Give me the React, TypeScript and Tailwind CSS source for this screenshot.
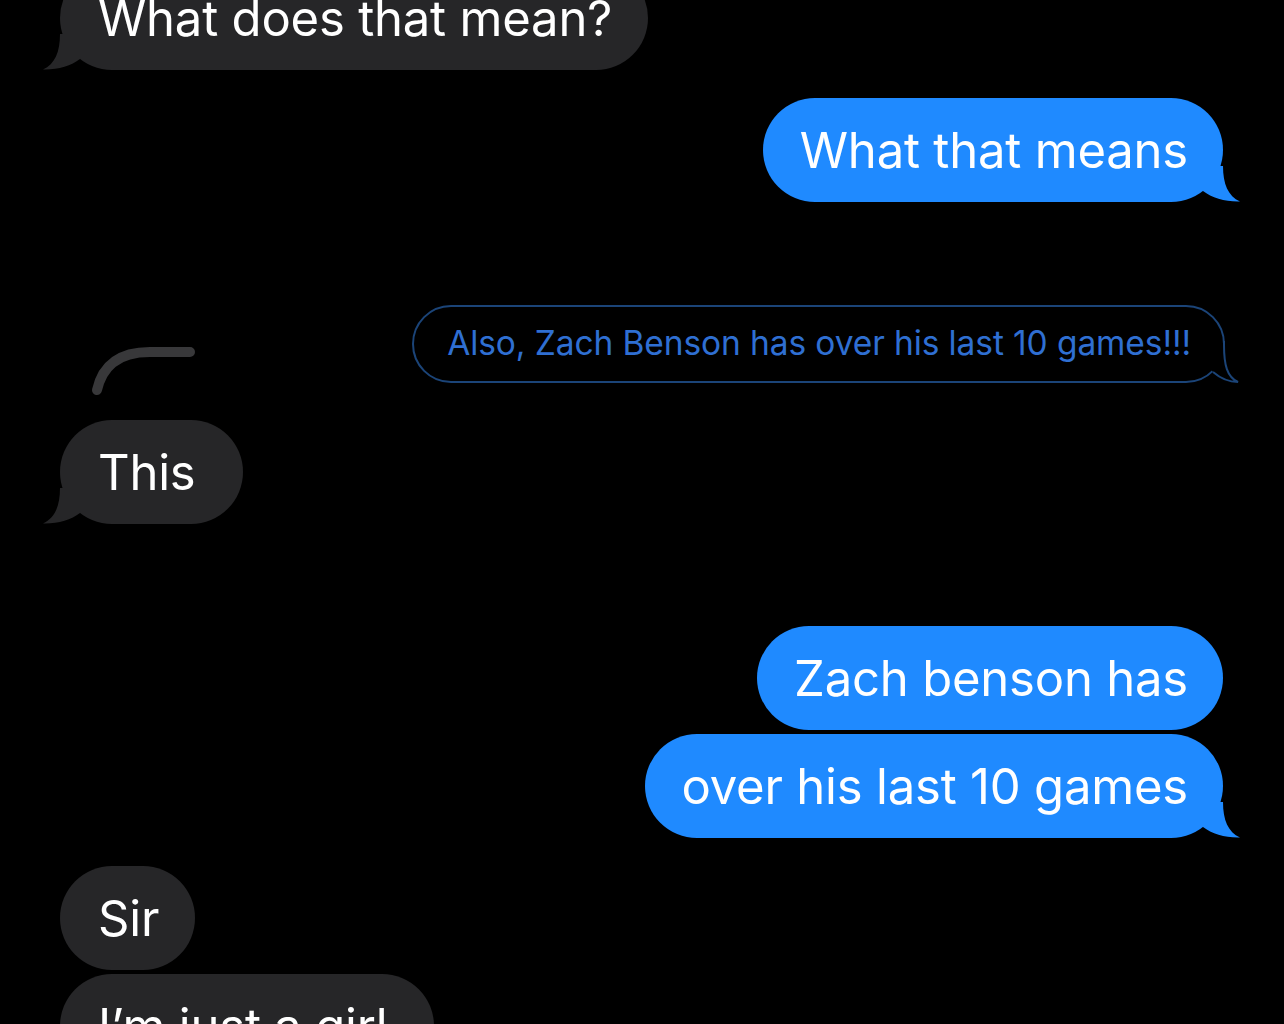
import React from "react";

function TailLeft({ color }: { color: string }) {
  return (
    <svg
      className="absolute bottom-0 left-[-17px]"
      width="40"
      height="36"
      viewBox="0 0 40 36"
    >
      <path d="M17 0 C17 18 12 30 0 35.5 C14 36 28 32 37 25 L37 0 Z" fill={color} />
    </svg>
  );
}

function TailRight({ color }: { color: string }) {
  return (
    <svg
      className="absolute bottom-0 right-[-17px]"
      width="40"
      height="36"
      viewBox="0 0 40 36"
    >
      <path d="M23 0 C23 18 28 30 40 35.5 C26 36 12 32 3 25 L3 0 Z" fill={color} />
    </svg>
  );
}

function Gray({ text, tail = false, wide = false }: { text: string; tail?: boolean; wide?: boolean }) {
  return (
    <div
      className={
        wide
          ? "relative self-start ml-[60px] h-[104px] flex items-center rounded-[52px] bg-[#262628] pl-[38px] pr-[47px]"
          : "relative self-start ml-[60px] h-[104px] flex items-center rounded-[52px] bg-[#262628] pl-[38px] pr-[36px]"
      }
    >
      {tail && <TailLeft color="#262628" />}
      <span className="relative text-[49px] leading-none text-white tracking-[-0.2px]">{text}</span>
    </div>
  );
}

function Blue({ text, tail = false }: { text: string; tail?: boolean }) {
  return (
    <div className="relative self-end mr-[61px] h-[104px] flex items-center rounded-[52px] bg-[#1f8aff] pl-[37px] pr-[35px]">
      {tail && <TailRight color="#1f8aff" />}
      <span className="relative text-[49px] leading-none text-white tracking-[-0.2px]">{text}</span>
    </div>
  );
}

export default function App() {
  return (
    <div
      className="relative w-[1284px] h-[1024px] overflow-hidden bg-black"
      style={{ fontFamily: "Inter, 'Noto Sans', sans-serif" }}
    >
      <div className="flex flex-col -mt-[34px]">
        <Gray text="What does that mean?" tail />
        <div className="mt-[28px] flex flex-col">
          <Blue text="What that means" tail />
        </div>
        <div className="mt-[103px] self-end mr-[59px] relative h-[78px] flex items-center rounded-[39px] border-2 border-[#1b4478] pl-[33px] pr-[32px]">
          <svg
            className="absolute bottom-[-4px] right-[-22px]"
            width="44"
            height="44"
            viewBox="0 0 44 44"
          >
            <path d="M23 2 C23 24 26 36 37 41 C28 41 19 37 12 31 L9 27 L21 2 Z" fill="#000" />
            <path
              d="M23 0 L23 4 C23 24 26 36 37 41 C28 41 19 37 12 31"
              fill="none"
              stroke="#1b4478"
              strokeWidth="2"
            />
          </svg>
          <span className="relative text-[33.5px] leading-none text-[#2f6fd2] tracking-[-0.1px]">
            Also, Zach Benson has over his last 10 games!!!
          </span>
        </div>
        <div className="mt-[37px] relative self-start">
          <svg
            className="absolute left-[88px] top-[-78px]"
            width="110"
            height="60"
            viewBox="0 0 110 60"
          >
            <path d="M9 48 C14 26 28 10 62 10 L102 10" fill="none" stroke="#38383a" strokeWidth="10" strokeLinecap="round" />
          </svg>
          <Gray text="This" tail wide />
        </div>
        <div className="mt-[102px] flex flex-col gap-[4px]">
          <Blue text="Zach benson has" />
          <Blue text="over his last 10 games" tail />
        </div>
        <div className="mt-[28px] flex flex-col gap-[4px]">
          <Gray text="Sir" />
          <Gray text="I’m just a girl" wide />
        </div>
      </div>
    </div>
  );
}
